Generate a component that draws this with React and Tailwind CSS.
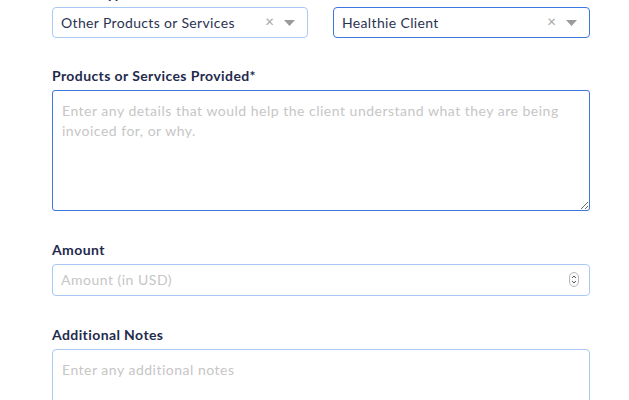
import React from "react";

const font = { fontFamily: "Lato, 'Noto Sans', sans-serif" };

function SelectBox({ value, focused }) {
  return (
    <div
      className={`flex items-center h-[31px] rounded-[4px] bg-white border pl-[8px] pr-[12px] ${
        focused ? "border-[#3b77dc]" : "border-[#a9c9f4]"
      }`}
    >
      <span className="flex-1 text-[14px] text-[#2b3352] tracking-[0.35px] truncate">
        {value}
      </span>
      <span className="text-[#a4a4a4] text-[15px] leading-none mr-[10px] -mt-[2px]">×</span>
      <svg width="11" height="6" viewBox="0 0 11 6">
        <path d="M0 0 L11 0 L5.5 6 Z" fill="#9b9b9b" />
      </svg>
    </div>
  );
}

function Label({ children }) {
  return (
    <label className="block text-[14px] leading-[18px] font-bold text-[#1f2b4d] tracking-[0.4px] mb-[5px]">
      {children}
    </label>
  );
}

export default function App() {
  return (
    <div className="w-[629px] h-[400px] overflow-hidden bg-white" style={font}>
      <div className="pl-[52px] pr-[39px] -mt-[15px]">
        {/* type + client */}
        <div className="flex gap-[25px]">
          <div className="w-[256px]">
            <label className="block text-[14px] leading-[18px] font-bold text-[#1f2b4d] tracking-[0.4px] mb-[4px] pl-[14px]">
              Item Type
            </label>
            <SelectBox value="Other Products or Services" />
          </div>
          <div className="flex-1">
            <label className="block text-[14px] leading-[18px] font-bold text-[#1f2b4d] tracking-[0.4px] mb-[4px]">
              &nbsp;
            </label>
            <SelectBox value="Healthie Client" focused />
          </div>
        </div>

        {/* products */}
        <div className="mt-[29px]">
          <Label>Products or Services Provided*</Label>
          <textarea
            placeholder="Enter any details that would help the client understand what they are being invoiced for, or why."
            className="block w-full h-[121px] rounded-[3px] border border-[#3b77dc] px-[9px] py-[10px] text-[14px] leading-[20px] tracking-[0.5px] text-[#2b3352] placeholder:text-[#c6c6c6] outline-none resize"
          />
        </div>

        {/* amount */}
        <div className="mt-[30px]">
          <Label>Amount</Label>
          <div className="relative">
            <input
              placeholder="Amount (in USD)"
              className="block w-full h-[32px] rounded-[4px] border border-[#a9c9f4] px-[8px] pb-[1px] text-[14px] tracking-[0.5px] text-[#2b3352] placeholder:text-[#c6c6c6] outline-none"
            />
            <svg
              className="absolute right-[11px] top-[8px]"
              width="10"
              height="15"
              viewBox="0 0 10 15"
            >
              <rect x="0.5" y="0.5" width="9" height="14" rx="4.5" fill="#fafafa" stroke="#b8b8b8" />
              <path d="M3 6 L5 4 L7 6" fill="none" stroke="#555" strokeWidth="1" />
              <path d="M3 9 L5 11 L7 9" fill="none" stroke="#555" strokeWidth="1" />
            </svg>
          </div>
        </div>

        {/* notes */}
        <div className="mt-[30px]">
          <Label>Additional Notes</Label>
          <textarea
            placeholder="Enter any additional notes"
            className="block w-full h-[100px] rounded-[4px] border border-[#a9c9f4] px-[9px] py-[10px] text-[14px] leading-[20px] tracking-[0.5px] text-[#2b3352] placeholder:text-[#c6c6c6] outline-none resize"
          />
        </div>
      </div>
    </div>
  );
}
